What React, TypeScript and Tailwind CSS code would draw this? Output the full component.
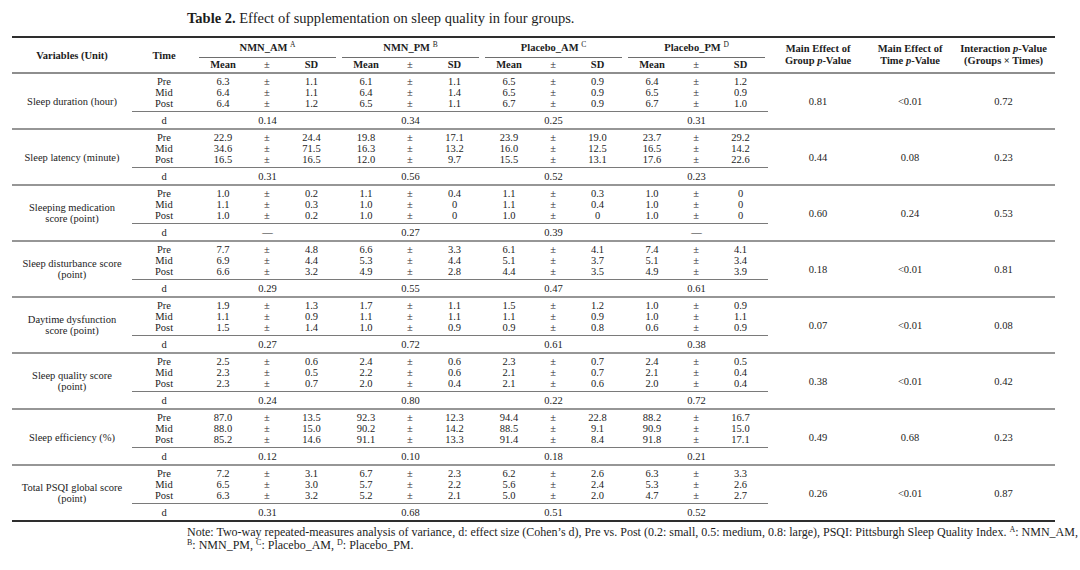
import React from "react";

type Row = {
  name: string[];
  mean: string[][];
  sd: string[][];
  d: string[];
  p: string[];
};

const groups = [
  { label: "NMN_AM", sup: "A" },
  { label: "NMN_PM", sup: "B" },
  { label: "Placebo_AM", sup: "C" },
  { label: "Placebo_PM", sup: "D" },
];

const rows: Row[] = [
  {
    name: ["Sleep duration (hour)"],
    mean: [["6.3", "6.4", "6.4"], ["6.1", "6.4", "6.5"], ["6.5", "6.5", "6.7"], ["6.4", "6.5", "6.7"]],
    sd: [["1.1", "1.1", "1.2"], ["1.1", "1.4", "1.1"], ["0.9", "0.9", "0.9"], ["1.2", "0.9", "1.0"]],
    d: ["0.14", "0.34", "0.25", "0.31"],
    p: ["0.81", "<0.01", "0.72"],
  },
  {
    name: ["Sleep latency (minute)"],
    mean: [["22.9", "34.6", "16.5"], ["19.8", "16.3", "12.0"], ["23.9", "16.0", "15.5"], ["23.7", "16.5", "17.6"]],
    sd: [["24.4", "71.5", "16.5"], ["17.1", "13.2", "9.7"], ["19.0", "12.5", "13.1"], ["29.2", "14.2", "22.6"]],
    d: ["0.31", "0.56", "0.52", "0.23"],
    p: ["0.44", "0.08", "0.23"],
  },
  {
    name: ["Sleeping medication", "score (point)"],
    mean: [["1.0", "1.1", "1.0"], ["1.1", "1.0", "1.0"], ["1.1", "1.1", "1.0"], ["1.0", "1.0", "1.0"]],
    sd: [["0.2", "0.3", "0.2"], ["0.4", "0", "0"], ["0.3", "0.4", "0"], ["0", "0", "0"]],
    d: ["—", "0.27", "0.39", "—"],
    p: ["0.60", "0.24", "0.53"],
  },
  {
    name: ["Sleep disturbance score", "(point)"],
    mean: [["7.7", "6.9", "6.6"], ["6.6", "5.3", "4.9"], ["6.1", "5.1", "4.4"], ["7.4", "5.1", "4.9"]],
    sd: [["4.8", "4.4", "3.2"], ["3.3", "4.4", "2.8"], ["4.1", "3.7", "3.5"], ["4.1", "3.4", "3.9"]],
    d: ["0.29", "0.55", "0.47", "0.61"],
    p: ["0.18", "<0.01", "0.81"],
  },
  {
    name: ["Daytime dysfunction", "score (point)"],
    mean: [["1.9", "1.1", "1.5"], ["1.7", "1.1", "1.0"], ["1.5", "1.1", "0.9"], ["1.0", "1.0", "0.6"]],
    sd: [["1.3", "0.9", "1.4"], ["1.1", "1.1", "0.9"], ["1.2", "0.9", "0.8"], ["0.9", "1.1", "0.9"]],
    d: ["0.27", "0.72", "0.61", "0.38"],
    p: ["0.07", "<0.01", "0.08"],
  },
  {
    name: ["Sleep quality score", "(point)"],
    mean: [["2.5", "2.3", "2.3"], ["2.4", "2.2", "2.0"], ["2.3", "2.1", "2.1"], ["2.4", "2.1", "2.0"]],
    sd: [["0.6", "0.5", "0.7"], ["0.6", "0.6", "0.4"], ["0.7", "0.7", "0.6"], ["0.5", "0.4", "0.4"]],
    d: ["0.24", "0.80", "0.22", "0.72"],
    p: ["0.38", "<0.01", "0.42"],
  },
  {
    name: ["Sleep efficiency (%)"],
    mean: [["87.0", "88.0", "85.2"], ["92.3", "90.2", "91.1"], ["94.4", "88.5", "91.4"], ["88.2", "90.9", "91.8"]],
    sd: [["13.5", "15.0", "14.6"], ["12.3", "14.2", "13.3"], ["22.8", "9.1", "8.4"], ["16.7", "15.0", "17.1"]],
    d: ["0.12", "0.10", "0.18", "0.21"],
    p: ["0.49", "0.68", "0.23"],
  },
  {
    name: ["Total PSQI global score", "(point)"],
    mean: [["7.2", "6.5", "6.3"], ["6.7", "5.7", "5.2"], ["6.2", "5.6", "5.0"], ["6.3", "5.3", "4.7"]],
    sd: [["3.1", "3.0", "3.2"], ["2.3", "2.2", "2.1"], ["2.6", "2.4", "2.0"], ["3.3", "2.6", "2.7"]],
    d: ["0.31", "0.68", "0.51", "0.52"],
    p: ["0.26", "<0.01", "0.87"],
  },
];

const Lines = ({ items }: { items: string[] }) => (
  <>
    {items.map((t, i) => (
      <div key={i}>{t}</div>
    ))}
  </>
);

const headCell =
  "border-t-2 border-b-2 border-t-[#2e2e2e] border-b-[#8e8e8e] p-0 align-middle";

export default function App() {
  return (
    <div
      className="w-[1080px] h-[570px] bg-white text-[#1c1c1c] overflow-hidden"
      style={{ fontFamily: '"Liberation Serif", "Times New Roman", serif' }}
    >
      {/* caption */}
      <div className="pt-[10px] pl-[187px] text-[14.5px] leading-[16px] whitespace-nowrap">
        <span className="font-bold">Table 2.</span> Effect of supplementation on sleep quality in four groups.
      </div>

      <table className="ml-[12px] mt-[10px] w-[1043px] table-fixed border-separate border-spacing-0 text-[10.5px] text-center">
        <colgroup>
          <col className="w-[120px]" />
          <col className="w-[64px]" />
          {groups.map((g) => (
            <React.Fragment key={g.label}>
              <col className="w-[54px]" />
              <col className="w-[34px]" />
              <col className="w-[55px]" />
            </React.Fragment>
          ))}
          <col className="w-[100px]" />
          <col className="w-[84px]" />
          <col className="w-[103px]" />
        </colgroup>
        <thead className="font-bold">
          <tr>
            <th rowSpan={2} className={`${headCell} leading-[11px]`}>
              Variables (Unit)
            </th>
            <th rowSpan={2} className={`${headCell} leading-[11px]`}>
              Time
            </th>
            {groups.map((g) => (
              <th key={g.label} colSpan={3} className="border-t-2 border-t-[#2e2e2e] p-0">
                <div className="mx-[3px] border-b border-[#6e6e6e] leading-[19px]">
                  {g.label} <sup className="text-[7.5px] font-normal">{g.sup}</sup>
                </div>
              </th>
            ))}
            <th rowSpan={2} className={`${headCell} leading-[12px]`}>
              Main Effect of
              <br />
              Group <i>p</i>-Value
            </th>
            <th rowSpan={2} className={`${headCell} leading-[12px]`}>
              Main Effect of
              <br />
              Time <i>p</i>-Value
            </th>
            <th rowSpan={2} className={`${headCell} leading-[12px]`}>
              Interaction <i>p</i>-Value
              <br />
              (Groups × Times)
            </th>
          </tr>
          <tr>
            {groups.map((g) => (
              <React.Fragment key={g.label}>
                <th className="border-b-2 border-[#8e8e8e] p-0 leading-[14px]">Mean</th>
                <th className="border-b-2 border-[#8e8e8e] p-0 leading-[14px] font-normal">±</th>
                <th className="border-b-2 border-[#8e8e8e] p-0 leading-[14px]">SD</th>
              </React.Fragment>
            ))}
          </tr>
        </thead>
        <tbody>
          {rows.map((r, ri) => {
            const last = ri === rows.length - 1;
            const sep = last
              ? "border-b-2 border-[#2e2e2e]"
              : "border-b-2 border-[#969696]";
            return (
              <React.Fragment key={ri}>
                <tr>
                  <td rowSpan={2} className={`${sep} p-0 align-middle leading-[11px]`}>
                    <Lines items={r.name} />
                  </td>
                  <td className="border-b border-[#7a7a7a] pt-[2px] pb-[2px] leading-[11px]">
                    <Lines items={["Pre", "Mid", "Post"]} />
                  </td>
                  {groups.map((g, gi) => (
                    <React.Fragment key={g.label}>
                      <td className="border-b border-[#7a7a7a] pt-[2px] pb-[2px] leading-[11px]">
                        <Lines items={r.mean[gi]} />
                      </td>
                      <td className="border-b border-[#7a7a7a] pt-[2px] pb-[2px] leading-[11px]">
                        <Lines items={["±", "±", "±"]} />
                      </td>
                      <td className="border-b border-[#7a7a7a] pt-[2px] pb-[2px] leading-[11px]">
                        <Lines items={r.sd[gi]} />
                      </td>
                    </React.Fragment>
                  ))}
                  {r.p.map((p, pi) => (
                    <td key={pi} rowSpan={2} className={`${sep} p-0 align-middle leading-[11px]`}>
                      {p}
                    </td>
                  ))}
                </tr>
                <tr>
                  <td className={`${sep} pt-[3px] pb-[2px] leading-[11px]`}>d</td>
                  {r.d.map((d, di) => (
                    <td key={di} colSpan={3} className={`${sep} pt-[3px] pb-[2px] leading-[11px]`}>
                      {d}
                    </td>
                  ))}
                </tr>
              </React.Fragment>
            );
          })}
        </tbody>
      </table>

      {/* note */}
      <div className="mt-[4px] pl-[187px] text-[12px] leading-[13px]">
        <div className="whitespace-nowrap">
          Note: Two-way repeated-measures analysis of variance, d: effect size (Cohen’s d), Pre vs. Post (0.2: small,
          0.5: medium, 0.8: large), PSQI: Pittsburgh Sleep Quality Index. <sup className="text-[8px]">A</sup>: NMN_AM,
        </div>
        <div className="whitespace-nowrap">
          <sup className="text-[8px]">B</sup>: NMN_PM, <sup className="text-[8px]">C</sup>: Placebo_AM,{" "}
          <sup className="text-[8px]">D</sup>: Placebo_PM.
        </div>
      </div>
    </div>
  );
}
